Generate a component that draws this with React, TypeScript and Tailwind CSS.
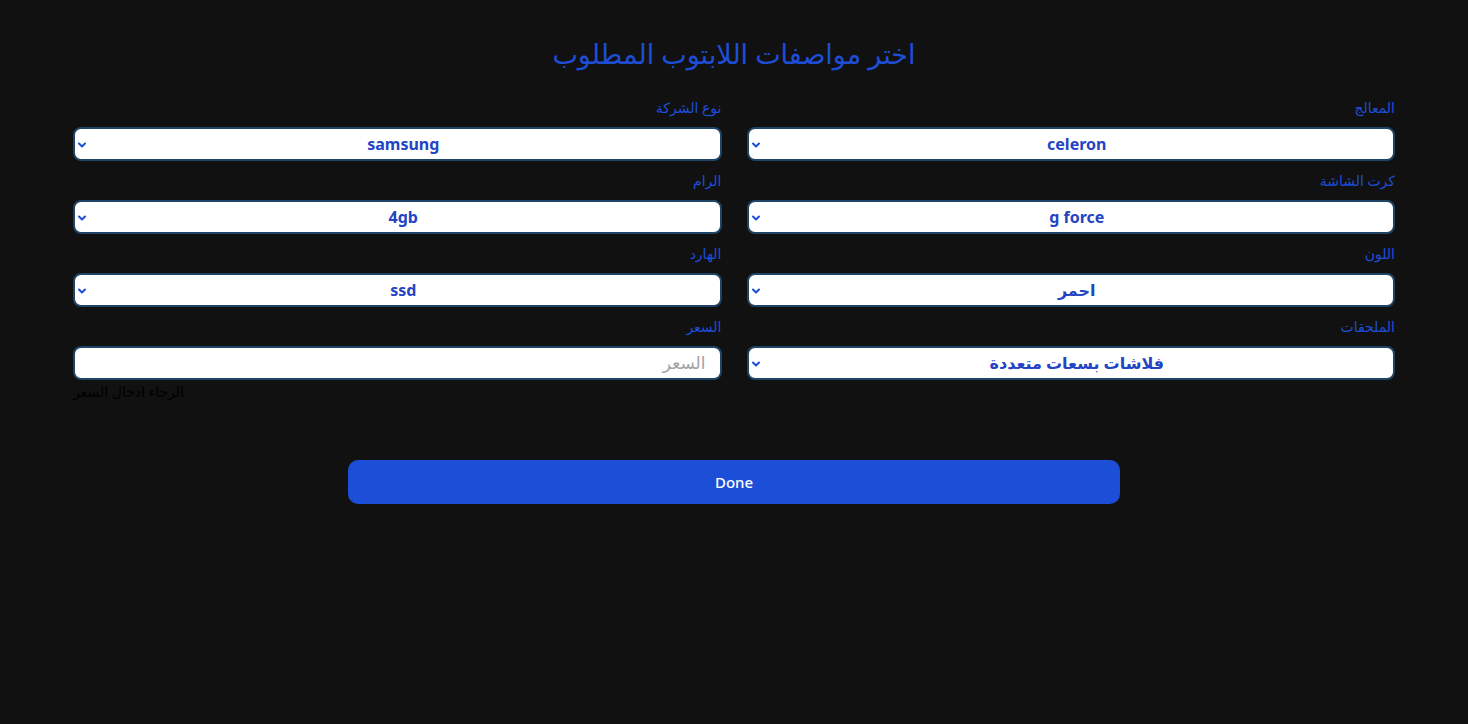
import React from "react";

const font = { fontFamily: '"Noto Sans", "DejaVu Sans", sans-serif' };

function Chevron() {
    return (
        <svg width="10" height="8" viewBox="0 0 10 8" className="shrink-0">
            <path d="M2 2.5 L5 5.5 L8 2.5" fill="none" stroke="#1d4ed8" strokeWidth="2" strokeLinecap="round" strokeLinejoin="round" />
        </svg>
    );
}

function SelectField({ label, value }: { label: string; value: string }) {
    return (
        <div className="flex flex-col">
            <label className="text-[14px] font-normal text-[#1d4ed8] leading-[20px] mb-[9px]">{label}</label>
            <div className="relative h-[34px] rounded-[8px] border-2 border-[#1f4466] bg-white flex items-center justify-center pl-[12px]">
                <span className="text-[16px] font-bold text-[#2344c4]">{value}</span>
                <span className="absolute left-[2px] top-[12px]">
                    <Chevron />
                </span>
            </div>
        </div>
    );
}

export default function App() {
    return (
        <div dir="rtl" style={font} className="min-h-screen w-full bg-[#111111] px-[73px] pt-[34px]">
            <h1 className="text-center text-[27px] font-normal text-[#1d4ed8] leading-[40px] mb-[24px]">
                اختر مواصفات اللابتوب المطلوب
            </h1>

            <div className="grid grid-cols-2 gap-x-[25px] gap-y-[10px]">
                <SelectField label="المعالج" value="celeron" />
                <SelectField label="نوع الشركة" value="samsung" />
                <SelectField label="كرت الشاشة" value="g force" />
                <SelectField label="الرام" value="4gb" />
                <SelectField label="اللون" value="احمر" />
                <SelectField label="الهارد" value="ssd" />
                <SelectField label="الملحقات" value="فلاشات بسعات متعددة" />
                <div className="flex flex-col relative">
                    <label className="text-[14px] font-normal text-[#1d4ed8] leading-[20px] mb-[9px]">السعر</label>
                    <div className="h-[34px] rounded-[8px] border-2 border-[#1f4466] bg-white flex items-center px-[14px]">
                        <span className="text-[17px] text-[#a3a3a3]">السعر</span>
                    </div>
                    <p dir="ltr" className="absolute top-[65px] left-0 text-[14px] text-black leading-[20px]">
                        <span dir="rtl">الرجاء ادخال السعر</span>
                    </p>
                </div>
            </div>

            <div className="flex justify-center mt-[80px]">
                <button className="w-[772px] h-[44px] rounded-[10px] bg-[#1d4ed8] text-white text-[15px] font-medium">
                    Done
                </button>
            </div>
        </div>
    );
}
